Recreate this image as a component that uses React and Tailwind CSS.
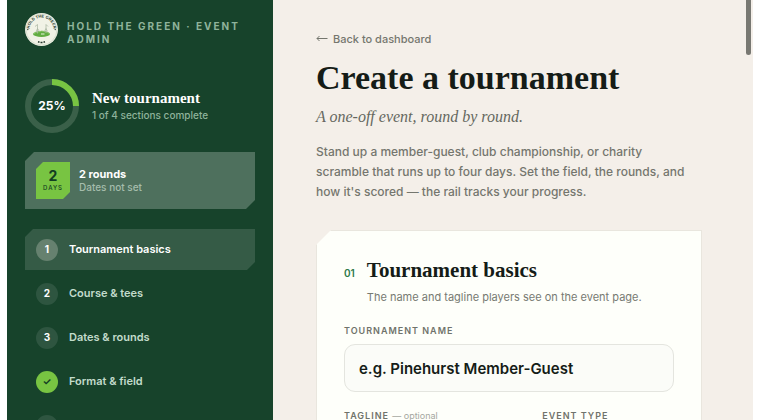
const steps = [
  { mark: '1', label: 'Tournament basics', state: 'active' },
  { mark: '2', label: 'Course & tees', state: 'idle' },
  { mark: '3', label: 'Dates & rounds', state: 'idle' },
  { mark: '✓', label: 'Format & field', state: 'done' },
  { mark: '', label: 'Review & publish', state: 'locked' },
];

const rowStyles = {
  active: 'bg-[#355b46] text-white',
  idle: 'text-[#c3dccb]',
  done: 'text-[#c3dccb]',
  locked: 'text-[#0f3520]',
};

const markStyles = {
  active: 'bg-[#66816f] text-white',
  idle: 'bg-[#2e5540] text-white',
  done: 'bg-[#78c442] text-[#123d22]',
  locked: 'bg-[#2e5540] text-white',
};

function Logo() {
  return (
    <svg viewBox="0 0 66 66" className="size-[33px] shrink-0" role="img" aria-label="Hold the Green">
      <defs>
        <path id="badge-arc" d="M9 33a24 24 0 0 1 48 0" />
      </defs>
      <circle cx="33" cy="33" r="33" fill="#f1f2e6" />
      <circle cx="33" cy="33" r="31" fill="none" stroke="#bcc8b4" strokeWidth="1" />
      <text fontFamily="Liberation Sans, sans-serif" fontSize="8" fontWeight="700" fill="#1c3627" textAnchor="middle">
        <textPath href="#badge-arc" startOffset="50%">HOLD THE GREEN</textPath>
      </text>
      <ellipse cx="33" cy="42" rx="17" ry="6" fill="#62ad42" />
      <path d="M17 42c4-4 9-3 13-5s10 0 19 4" fill="none" stroke="#8cc66a" strokeWidth="2" />
      <path d="M25 41V23l-5 4M42 40V23l4 4M22 38l3-7 4 6M38 38l4-7 3 6" fill="none" stroke="#aab5a2" strokeWidth="1.5" />
      <path d="M32 42h7" stroke="#e7f0dc" strokeWidth="2" />
      <circle cx="5.5" cy="33" r="1.5" fill="#46594c" />
      <circle cx="60.5" cy="33" r="1.5" fill="#46594c" />
      <path d="M26 57.5l3 1M31 59h4M37 58.5l3-1" stroke="#26382c" strokeWidth="3" />
    </svg>
  );
}

function ProgressRing() {
  return (
    <div className="relative size-[54px] shrink-0">
      <svg viewBox="0 0 54 54" className="size-full" aria-hidden="true">
        <circle cx="27" cy="27" r="24" fill="none" stroke="#3a6049" strokeWidth="6" />
        <path d="M27 3a24 24 0 0 1 24 24" fill="none" stroke="#78c442" strokeWidth="6" />
      </svg>
      <span className="absolute inset-0 flex items-center justify-center text-xs font-bold text-white">25%</span>
    </div>
  );
}

function Sidebar() {
  return (
    <aside className="w-[266px] shrink-0 bg-[#17432b] px-[18px] pt-[13px]">
      <div className="flex items-center gap-[9px]">
        <Logo />
        <p className="pt-[6px] text-[10px] leading-[13px] font-bold tracking-[2px] text-[#8fb39b] uppercase">
          Hold the Green · Event Admin
        </p>
      </div>

      <div className="mt-[33px] flex items-center gap-[13px]">
        <ProgressRing />
        <div>
          <p className="font-['Liberation_Serif',serif] text-[15px] leading-[18px] font-bold text-white">New tournament</p>
          <p className="text-[10px] leading-[16px] font-medium text-[#8fb39b]">1 of 4 sections complete</p>
        </div>
      </div>

      <div className="mt-[19px] flex h-[57px] items-center gap-[9px] bg-[#4e705d] px-[11px] [clip-path:polygon(9px_0,100%_0,100%_calc(100%-9px),calc(100%-9px)_100%,0_100%,0_9px)]">
        <div className="flex h-[37px] w-[34px] flex-col items-center justify-center bg-[#78c442] text-[#123d22] [clip-path:polygon(7px_0,100%_0,100%_calc(100%-7px),calc(100%-7px)_100%,0_100%,0_7px)]">
          <span className="text-sm leading-[14px] font-bold">2</span>
          <span className="text-[6px] leading-[9px] font-medium tracking-[1px]">DAYS</span>
        </div>
        <div>
          <p className="text-[11px] leading-[13px] font-bold text-white">2 rounds</p>
          <p className="text-[10px] leading-[13px] font-medium text-[#a5bdac]">Dates not set</p>
        </div>
      </div>

      <nav className="mt-[20px]">
        <ol className="flex flex-col gap-[3px]">
          {steps.map((step) => (
            <li key={step.label}>
              <button
                type="button"
                className={`flex h-[41px] w-full items-center gap-[11px] px-[11px] text-left text-[11px] font-semibold [clip-path:polygon(8px_0,100%_0,100%_calc(100%-8px),calc(100%-8px)_100%,0_100%,0_8px)] ${rowStyles[step.state]}`}
              >
                <span className={`flex size-[22px] items-center justify-center rounded-full text-[10px] font-bold ${markStyles[step.state]}`}>
                  {step.mark}
                </span>
                {step.label}
              </button>
            </li>
          ))}
        </ol>
      </nav>
    </aside>
  );
}

const labelClass = 'block text-[9px] leading-[12px] font-semibold tracking-[1px] text-[#70736b]';
const fieldClass =
  'block h-12 w-full rounded-[11px] border border-[#e4e5df] bg-[#fbfcf8] px-[14px] text-[15px] font-semibold text-[#151c17] placeholder:text-[#151c17]';

function BasicsCard() {
  return (
    <section className="mt-[28px] border border-[#e9e6de] bg-[#fefffa] px-[27px] pt-[25px] pb-8 [clip-path:polygon(15px_0,100%_0,100%_100%,0_100%,0_15px)]">
      <div className="grid grid-cols-[auto_1fr] items-baseline gap-x-3">
        <span className="text-[10px] font-semibold text-[#2d7a4a]">01</span>
        <h2 className="font-['Liberation_Serif',serif] text-[21px] leading-[28px] font-bold text-[#151c17]">Tournament basics</h2>
        <p className="col-start-2 mt-[5px] text-[11px] leading-[16px] text-[#777a72]">
          The name and tagline players see on the event page.
        </p>
      </div>

      <label htmlFor="name" className={`mt-[20px] ${labelClass}`}>TOURNAMENT NAME</label>
      <input id="name" type="text" placeholder="e.g. Pinehurst Member-Guest" className={`mt-[7px] ${fieldClass}`} />

      <div className="mt-[18px] grid grid-cols-[14fr_10fr] gap-x-[14px]">
        <div>
          <label htmlFor="tagline" className={labelClass}>
            TAGLINE <span className="font-normal tracking-normal text-[#a5a7a0]">— optional</span>
          </label>
          <input id="tagline" type="text" className={`mt-[7px] ${fieldClass}`} />
        </div>
        <div>
          <label htmlFor="type" className={labelClass}>EVENT TYPE</label>
          <select id="type" className={`mt-[7px] ${fieldClass}`} />
        </div>
      </div>
    </section>
  );
}

export default function App() {
  return (
    <div className="h-screen overflow-hidden bg-white px-[7px] font-[Inter,sans-serif]">
      <div className="relative flex min-h-full bg-[#f4efe9]">
        <Sidebar />
        <main className="min-w-0 flex-1 pt-[31px] pr-[51px] pl-[43px]">
          <a href="#dashboard" className="flex items-center gap-[5px] text-[11px] leading-[16px] font-medium text-[#74766e]">
            <svg viewBox="0 0 12 10" className="h-[10px] w-3" fill="none" stroke="currentColor" aria-hidden="true">
              <path d="M11.5 4.5H1M3.5 2L1 4.5L3.5 7" />
            </svg>
            Back to dashboard
          </a>
          <h1 className="mt-[10px] font-['Liberation_Serif',serif] text-[34px] leading-[42px] font-bold text-[#151c17]">Create a tournament</h1>
          <p className="mt-[6px] font-['Liberation_Serif',serif] text-base leading-[24px] text-[#65685f] italic">
            A one-off event, round by round.
          </p>
          <p className="mt-[13px] max-w-[380px] text-xs leading-[20px] font-medium text-[#74766e]">
            Stand up a member-guest, club championship, or charity scramble that runs up to four days. Set the field, the
            rounds, and how it's scored — the rail tracks your progress.
          </p>
          <BasicsCard />
        </main>
        <div className="absolute top-0 right-[2px] h-[55px] w-[5px] rounded-b-full bg-[#787872]" />
      </div>
    </div>
  );
}
